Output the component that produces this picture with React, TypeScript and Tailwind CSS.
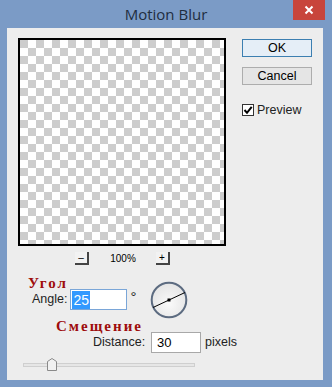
import React from "react";

export default function App() {
  return (
    <div className="w-[332px] h-[387px] bg-[#7b9bc6] flex flex-col font-['Liberation_Sans',Arial,sans-serif] overflow-hidden">
      <div className="h-[28px] relative flex items-center justify-center shrink-0">
        <span className="text-[15px] text-[#1f2d40] font-['Open_Sans',sans-serif] leading-none mt-[1px]">Motion Blur</span>
        <div className="absolute right-[7px] top-0 w-[32px] h-[20px] bg-[#c8453b] flex items-center justify-center">
          <svg width="10" height="10" viewBox="0 0 10 10">
            <path d="M1.5 1.5 L8.5 8.5 M8.5 1.5 L1.5 8.5" stroke="#fff" strokeWidth="2" />
          </svg>
        </div>
      </div>
      <div className="ml-[7px] mr-[9px] h-[352px] bg-[#ededed] flex shrink-0">
        <div className="w-[230px] pl-[11px] pt-[10px] flex flex-col">
          <div className="w-[208px] h-[208px] border-2 border-black bg-[conic-gradient(#fff_25%,#cdcdcd_0_50%,#fff_0_75%,#cdcdcd_0)] bg-size-[16px_16px]" />
          <div className="flex items-center h-[13px] mt-[6px] pl-[57px] text-[10px] text-black">
            <div className="w-[14px] h-[13px] bg-[#f2f2f2] border-r-2 border-b-2 border-[#444] flex items-center justify-center leading-none">–</div>
            <span className="ml-[21px] w-[26px] text-center">100%</span>
            <div className="ml-[20px] w-[14px] h-[13px] bg-[#f2f2f2] border-r-2 border-b-2 border-[#444] flex items-center justify-center leading-none">+</div>
          </div>
          <div className="mt-[11px] pl-[10px] h-[14px] leading-none text-[15px] font-bold not-italic text-[#9e0d0d] tracking-[2px] font-['Liberation_Serif',serif]">Угол</div>
          <div className="flex items-center h-[21px] mt-[-1px]">
            <span className="ml-[14px] text-[12.5px] text-[#222]">Angle:</span>
            <div className="ml-[3px] w-[57px] h-[21px] border border-[#7aa6d8] bg-white flex items-center pl-[1px]">
              <span className="bg-[#3399ff] text-white text-[14px] leading-[18px] px-[1px]">25</span>
            </div>
            <span className="ml-[3px] -mt-[6px] text-[15px] leading-none text-[#222]">°</span>
            <svg className="ml-[14px] -my-[9px]" width="38" height="38" viewBox="0 0 38 38">
              <defs>
                <radialGradient id="g" cx="50%" cy="60%" r="60%">
                  <stop offset="0%" stopColor="#fafafa" />
                  <stop offset="100%" stopColor="#e4e4e4" />
                </radialGradient>
              </defs>
              <circle cx="19" cy="19" r="17.3" fill="url(#g)" stroke="#5c6b80" strokeWidth="2" />
              <line x1="3" y1="26.5" x2="35" y2="11.5" stroke="#000" strokeWidth="1" />
              <rect x="17.5" y="17.5" width="3" height="3" fill="#000" />
            </svg>
          </div>
          <div className="mt-[9px] pl-[38px] h-[13px] leading-none text-[15px] font-bold not-italic text-[#9e0d0d] tracking-[2px] font-['Liberation_Serif',serif]">Смещение</div>
          <div className="flex items-center h-[21px]">
            <span className="ml-[75px] text-[12.5px] text-[#222]">Distance:</span>
            <div className="ml-[6px] w-[57px] h-[21px] border border-[#a8a8a8] bg-white flex items-center pl-[5px] text-[13px] text-black">30</div>
            <span className="ml-[4px] text-[12.5px] text-[#222]">pixels</span>
          </div>
          <div className="relative mt-[10px] ml-[5px] w-[172px] h-[4px] border border-[#cfcfcf] bg-[#e6e6e6]">
            <svg className="absolute left-[23px] -top-[6px]" width="10" height="13" viewBox="0 0 10 13">
              <path d="M0.5 12.5 V3.5 L5 0.5 L9.5 3.5 V12.5 Z" fill="#f1f1f1" stroke="#8a8a8a" strokeWidth="1" />
            </svg>
          </div>
        </div>
        <div className="flex flex-col pl-[5px] pt-[11px]">
          <div className="w-[70px] h-[18px] border border-[#3c7fb1] bg-[#e5eef7] flex items-center justify-center text-[12.5px] text-black">OK</div>
          <div className="mt-[10px] w-[70px] h-[18px] border border-[#adadad] bg-[#e5e5e5] flex items-center justify-center text-[12.5px] text-black">Cancel</div>
          <div className="mt-[16px] flex items-center">
            <div className="w-[12px] h-[12px] border border-[#333] bg-white flex items-center justify-center">
              <svg width="10" height="10" viewBox="0 0 10 10">
                <path d="M1.5 5 L4 7.8 L8.7 1.8" stroke="#000" strokeWidth="2" fill="none" />
              </svg>
            </div>
            <span className="ml-[3px] text-[12.5px] text-[#222]">Preview</span>
          </div>
        </div>
      </div>
    </div>
  );
}
